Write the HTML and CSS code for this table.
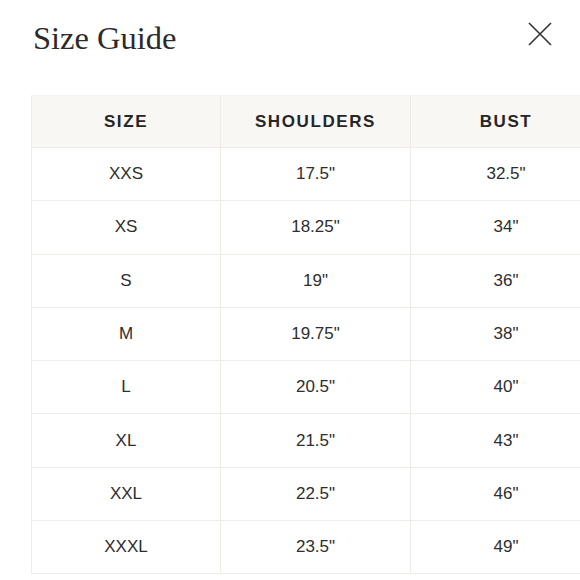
FILE: index.html
```html
<!DOCTYPE html>
<html>
<head>
<meta charset="utf-8">
<link rel="stylesheet" href="styles.css">
</head>
<body>
<div class="modal">
  <div class="modal-head">
    <h1 class="title">Size Guide</h1>
    <button class="close" aria-label="Close">
      <svg width="24" height="24" viewBox="0 0 24 24"><path d="M1 1 L23 23 M23 1 L1 23" stroke="#333" stroke-width="1.6" fill="none"/></svg>
    </button>
  </div>
  <table class="sizes">
    <colgroup>
      <col class="c1"><col class="c2"><col class="c3">
    </colgroup>
    <thead>
      <tr><th>Size</th><th>Shoulders</th><th>Bust</th></tr>
    </thead>
    <tbody>
      <tr><td>XXS</td><td>17.5"</td><td>32.5"</td></tr>
      <tr><td>XS</td><td>18.25"</td><td>34"</td></tr>
      <tr><td>S</td><td>19"</td><td>36"</td></tr>
      <tr><td>M</td><td>19.75"</td><td>38"</td></tr>
      <tr><td>L</td><td>20.5"</td><td>40"</td></tr>
      <tr><td>XL</td><td>21.5"</td><td>43"</td></tr>
      <tr><td>XXL</td><td>22.5"</td><td>46"</td></tr>
      <tr><td>XXXL</td><td>23.5"</td><td>49"</td></tr>
    </tbody>
  </table>
</div>
</body>
</html>
```
FILE: styles.css
```css
html, body {
  margin: 0;
  padding: 0;
  background: #fff;
  overflow: hidden;
}
.modal {
  width: 640px;
  padding: 0 0 0 31px;
}
.modal-head {
  display: flex;
  align-items: flex-start;
  justify-content: space-between;
  width: 521px;
  height: 95px;
}
.title {
  margin: 16px 0 0 2px;
  font-family: "Liberation Serif", serif;
  font-weight: normal;
  font-size: 32.5px;
  line-height: 44px;
  color: #2b2b2b;
}
.close {
  margin-top: 22px;
  padding: 0;
  border: 0;
  background: none;
  width: 24px;
  height: 24px;
  display: block;
}
.close svg { display: block; }
.sizes {
  border-collapse: collapse;
  table-layout: fixed;
  width: 570px;
  font-family: "Liberation Sans", Arial, sans-serif;
  color: #2e2e2e;
}
.c1 { width: 189px; }
.c2 { width: 190px; }
.c3 { width: 191px; }
.sizes th, .sizes td {
  border: 1px solid #efece7;
  text-align: center;
  padding: 0;
}
.sizes th {
  background: #f9f7f3;
  height: 51px;
  font-size: 17px;
  font-weight: bold;
  text-transform: uppercase;
  letter-spacing: 1.6px;
  color: #262626;
  border-top-color: #f6f4f0;
}
.sizes td {
  height: 52.3px;
  font-size: 17px;
}
```
